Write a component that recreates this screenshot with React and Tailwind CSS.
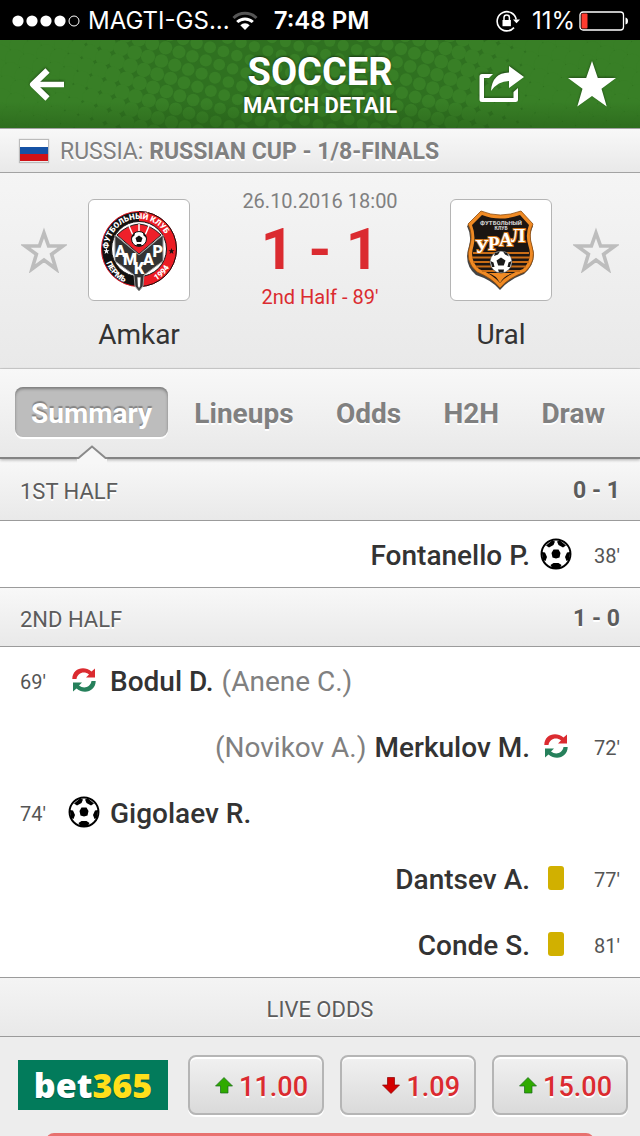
import { useState } from 'react';

const tabs = ['Summary', 'Lineups', 'Odds', 'H2H', 'Draw'];

const firstHalf = [
    { id: 1, side: 'away', type: 'goal', player: 'Fontanello P.', minute: "38'" },
];

const secondHalf = [
    { id: 2, side: 'home', type: 'sub', player: 'Bodul D.', out: '(Anene C.)', minute: "69'" },
    { id: 3, side: 'away', type: 'sub', player: 'Merkulov M.', out: '(Novikov A.)', minute: "72'" },
    { id: 4, side: 'home', type: 'goal', player: 'Gigolaev R.', minute: "74'" },
    { id: 5, side: 'away', type: 'yellow', player: 'Dantsev A.', minute: "77'" },
    { id: 6, side: 'away', type: 'yellow', player: 'Conde S.', minute: "81'" },
];

const odds = [
    { id: 'home', value: '11.00', up: true },
    { id: 'draw', value: '1.09', up: false },
    { id: 'away', value: '15.00', up: true },
];

// Halftone dots on a tilted square grid, growing towards both sides
const dots = [];
for (let i = -30; i < 50; i++) {
    for (let j = -30; j < 30; j++) {
        const x = 179 + i * 13.4 - j * 4.2;
        const y = 12 + i * 4.2 + j * 13.2;
        if (x > -12 && x < 652 && y > -12 && y < 100) {
            const d = x - 300;
            dots.push({ x, y, r: Math.min(9.6, 5.5 + 0.00007 * d * d) });
        }
    }
}

function StatusBar() {
    return (
        <div className="flex h-10 shrink-0 items-center justify-between bg-black px-3 pt-[2px] font-[Inter,sans-serif] text-2xl text-white">
            <div className="flex items-center">
                <svg width="68" height="12" viewBox="0 0 68 12" className="mr-2">
                    {[6, 20, 34, 48].map((x) => (
                        <circle key={x} cx={x} cy="6" r="5.6" fill="#fff" />
                    ))}
                    <circle cx="62" cy="6" r="5" fill="none" stroke="#fff" />
                </svg>
                <span>MAGTI-GS...</span>
                <svg width="26" height="20" viewBox="0 0 26 20" className="ml-[2px]" fill="none" strokeWidth="3">
                    <path d="M1.5 7 A16.5 16.5 0 0 1 24.5 7" stroke="#555" />
                    <path d="M5.2 11 A11.3 11.3 0 0 1 20.8 11" stroke="#fff" />
                    <path d="M13 19 L8.3 14.2 A6.8 6.8 0 0 1 17.7 14.2 Z" fill="#fff" stroke="none" />
                </svg>
                <span className="ml-4 font-semibold">7:48 PM</span>
            </div>
            <div className="flex items-center">
                <svg width="24" height="22" viewBox="0 0 24 22" className="mr-3" fill="none" stroke="#fff">
                    <path d="M18 17.6 A9.6 9.6 0 1 1 20.2 9.5" strokeWidth="1.6" />
                    <path d="M17 9.5 H24 L20.5 13.2 Z" fill="#fff" stroke="none" />
                    <rect x="6.5" y="10" width="8.4" height="6.2" fill="#fff" stroke="none" />
                    <path d="M8 10 V7.6 A2.7 2.7 0 0 1 13.4 7.6 V10" strokeWidth="1.5" />
                </svg>
                <span>11%</span>
                <svg width="49" height="20" viewBox="0 0 49 20" className="ml-1">
                    <rect x="1" y="1" width="43.5" height="18" rx="3" fill="none" stroke="#fff" strokeWidth="1.3" />
                    <rect x="2.5" y="2.5" width="6" height="15" rx="1" fill="#ff3b2f" />
                    <path d="M46.5 6.5 Q49 7 49 10 T46.5 13.5 Z" fill="#fff" />
                </svg>
            </div>
        </div>
    );
}

function Header() {
    return (
        <header className="relative flex h-[88px] shrink-0 items-center justify-between bg-[#2f7120] px-7 text-white">
            <svg className="absolute inset-0 h-full w-full" viewBox="0 0 640 88" preserveAspectRatio="xMidYMid slice">
                <defs>
                    <linearGradient id="headerShade" x1="0" y1="0" x2="0" y2="1">
                        <stop offset="0.7" stopColor="#1c4c10" stopOpacity="0" />
                        <stop offset="1" stopColor="#1c4c10" stopOpacity="0.35" />
                    </linearGradient>
                </defs>
                {dots.map((dot) => (
                    <circle key={`${dot.x}-${dot.y}`} cx={dot.x} cy={dot.y} r={dot.r} fill="#387f26" />
                ))}
                <rect width="640" height="88" fill="url(#headerShade)" />
            </svg>
            <div className="relative flex flex-1">
                <button type="button" aria-label="Back">
                    <svg width="37" height="34" viewBox="0 0 37 34" fill="none" stroke="#fff" strokeWidth="6" className="drop-shadow-[0_-1px_1px_rgba(0,0,0,0.4)]">
                        <path d="M19.5 3.5 L5 17.5 L19.5 31.5" strokeLinejoin="round" />
                        <path d="M4 17.5 H36" strokeWidth="5.5" />
                    </svg>
                </button>
            </div>
            <div className="relative flex flex-col items-center pt-2 font-bold [text-shadow:0_-1px_2px_rgba(0,0,0,0.5)]">
                <h1 className="text-[38px] leading-9">SOCCER</h1>
                <h2 className="text-[22px] leading-8">MATCH DETAIL</h2>
            </div>
            <div className="relative flex flex-1 items-center justify-end gap-11">
                <button type="button" aria-label="Share">
                    <svg width="48" height="40" viewBox="0 0 48 40" className="drop-shadow-[0_-1px_1px_rgba(0,0,0,0.4)]">
                        <path d="M17 10 H6 Q3.500 10 3.500 12.500 V35.500 Q3.500 38 6 38 H39.500 Q42 38 42 35.500 V24 L37.500 28 V34 H8 V14 H13 Z" fill="#fff" />
                        <path d="M15 27 Q16 9 33 8.500 V2 L48 13 L33 24 V17 Q22 17 15 27 Z" fill="#fff" />
                    </svg>
                </button>
                <button type="button" aria-label="Favourite" className="-mr-1">
                    <svg width="48" height="46" viewBox="0 0 48 46" className="drop-shadow-[0_-1px_1px_rgba(0,0,0,0.4)]">
                        <path d="M24 0 L29.800 17 H48 L33.500 27.800 L38.700 45.500 L24 35 L9.300 45.500 L14.500 27.800 L0 17 H18.200 Z" fill="#fff" />
                    </svg>
                </button>
            </div>
        </header>
    );
}

function StarOutline({ label }) {
    return (
        <button type="button" aria-label={label} className="flex h-[102px] items-center">
            <svg width="46" height="46" viewBox="0 0 46 46" fill="none" stroke="#bdbdbd" strokeWidth="3.600">
                <path d="M23 6 L27.600 19 H42 L30.600 27.300 L35 42 L23 33 L11 42 L15.400 27.300 L4 19 H18.400 Z" />
            </svg>
        </button>
    );
}

function Team({ name, children }) {
    return (
        <div className="flex w-[102px] flex-col items-center">
            <div className="flex h-[102px] w-full items-center justify-center rounded-md border border-[#b5b5b5] bg-white">
                {children}
            </div>
            <span className="mt-4 text-[28px] leading-9 text-[#333]">{name}</span>
        </div>
    );
}

function AmkarCrest() {
    return (
        <svg width="80" height="84" viewBox="0 0 80 84" fontFamily="Roboto, sans-serif" fontWeight="900">
            <defs>
                <path id="amkarTop" d="M10 47 A30.500 30.500 0 1 1 70 47" />
                <path id="amkarLeft" d="M5 47 A35.500 35.500 0 0 0 34 77" />
                <path id="amkarRight" d="M46 76.500 A35.500 35.500 0 0 0 74.500 48" />
            </defs>
            <circle cx="40" cy="41" r="37.500" fill="#111" stroke="#e1131b" strokeWidth="1" />
            <path d="M40 3.500 A37.500 37.500 0 0 1 40 78.500 Z" fill="#ec1c24" />
            <path d="M40 3.500 A37.500 37.500 0 0 1 40 78.500" fill="none" stroke="#111" />
            <circle cx="40" cy="41" r="27.500" fill="#fff" stroke="#111" />
            <path d="M16 27 L40 47 L64 27 L64 53 L45 67 L44 78 L40 83 L36 78 L35 67 L16 53 Z" fill="#333" stroke="#999" />
            <path d="M18 27 Q28 17 40 16 Q52 17 62 27 L40 46 Z" fill="#ee202a" stroke="#222" />
            <path d="M30 18 L36 32 M40 16 V30 M50 18 L44 32" stroke="#fff" strokeWidth="1.5" />
            <circle cx="40" cy="31" r="7.500" fill="#fff" stroke="#111" />
            <path d="M40 27.500 L43.500 30 L42.200 34 H37.800 L36.500 30 Z M34 26 L36 24.500 L35.500 27.500 L32.500 30 Z M46 26 L44 24.500 L44.500 27.500 L47.500 30 Z M37 38 L38 36 H42 L43 38 Z" fill="#111" />
            <text x="16 24 35 44 53.500" y="49 57 66 57 49" fontSize="16" fill="#fff">АМКАР</text>
            <path d="M38 69 H42 L41.500 78 L40 81 L38.500 78 Z" fill="#fff" stroke="#333" strokeWidth="0.7" />
            <text fontSize="8" fill="#fff">
                <textPath href="#amkarTop" startOffset="6">ФУТБОЛЬНЫЙ КЛУБ</textPath>
            </text>
            <text fontSize="8" fill="#fff">
                <textPath href="#amkarLeft" startOffset="8">ПЕРМЬ</textPath>
            </text>
            <text fontSize="8" fill="#fff">
                <textPath href="#amkarRight" startOffset="12">1994</textPath>
            </text>
            <path d="M7.500 40 L8.300 42.300 H10.500 L8.700 43.600 L9.400 46 L7.500 44.600 L5.600 46 L6.300 43.600 L4.500 42.300 H6.700 Z" fill="#fff" />
            <path d="M72.500 40 L73.300 42.300 H75.500 L73.700 43.600 L74.400 46 L72.500 44.600 L70.600 46 L71.300 43.600 L69.500 42.300 H71.700 Z" fill="#111" />
        </svg>
    );
}

function UralCrest() {
    return (
        <svg width="74" height="84" viewBox="0 0 74 84" fontFamily="Roboto, sans-serif" fontWeight="900">
            <path d="M16 5 Q36 12 58 5 L69 18 Q64 28 68 38 Q74 54 60 66 Q44 72 36 82 Q28 72 12 67 Q-1 56 5 38 Q8 28 3 18 Z" fill="#444" />
            <path d="M17 3 Q36 11 57 3 L69 16 Q64 26 68 38 Q73 53 61 64 Q44 70 36 80 Q28 70 13 64 Q0 53 6 37 Q9 26 4 16 Z" fill="#f08a24" stroke="#8d4a0b" strokeWidth="0.8" />
            <path d="M18 7 Q36 14 56 7 L65 17 Q61 27 64.500 38 Q69 51 59 61 Q44 66 36 75 Q28 66 15 61 Q5 52 9.500 38 Q12 27 8 17 Z" fill="#1c1512" />
            <path d="M9 45 H65 M8 49.500 H66 M9 54 H65 M12 58.500 H62 M18 63 H56" stroke="#c96d17" strokeWidth="2" />
            <path d="M24 65 Q32 67 36 75 Q40 67 50 65 Z" fill="#f08a24" />
            <text x="37" y="17" fontSize="6" textAnchor="middle" fill="#c9c9c9">ФУТБОЛЬНЫЙ</text>
            <text x="37" y="22" fontSize="5" textAnchor="middle" fill="#c9c9c9">КЛУБ</text>
            <text x="11 24 35 47" y="45 42 38 34" fontSize="19" fontFamily="Liberation Serif, serif" fontWeight="700" fill="#fff" stroke="#d0761b" strokeWidth="2" paintOrder="stroke">УРАЛ</text>
            <circle cx="37" cy="54" r="11" fill="#fff" stroke="#333" strokeWidth="0.6" />
            <path d="M37 49.500 L41.500 52.500 L39.800 57.500 H34.200 L32.500 52.500 Z M31 45 L36 43.500 L34 46.500 L30 48 Z M43 45 L39 43.500 L41 46.500 L45 48.500 Z M26.500 53 L29.500 54.500 L30.500 59 L28 59 Z M47.500 53 L44.500 54.500 L43.500 59 L46 59 Z M34 61.500 L40 61.500 L39.500 64.500 L35 64.500 Z" fill="#1b1b1b" />
        </svg>
    );
}

function BallIcon() {
    return (
        <svg width="32" height="32" viewBox="0 0 32 32">
            <circle cx="16" cy="16" r="14.500" fill="#fff" stroke="#000" strokeWidth="1.900" />
            <path d="M13.500 11.500 H18.500 L20.500 15 L19.500 19.500 L16 20.500 L12.500 19.500 L11.500 15 Z M6 7.500 L12 2.500 L15 3.500 L13.500 7 L9 9.500 Z M26 7.500 L20 2.500 L17 3.500 L18.500 7 L23 9.500 Z M1.800 14 L5 14.500 L7 19 L5.500 23 L3 22 Z M30.200 14 L27 14.500 L25 19 L26.500 23 L29 22 Z M10.500 27 L13.500 25 H18.500 L21.500 27 L19.500 30.500 H12.500 Z" fill="#000" />
        </svg>
    );
}

function SubIcon() {
    return (
        <svg width="24" height="24" viewBox="0 0 24 24">
            <path d="M0.300 11 C0.300 1 11.500 -3 19.500 3.500 L23 0.500 V9.500 H14 L17 6.500 C12 2.500 5.500 5 4.500 11 Z" fill="#db2b30" />
            <path d="M23.700 13 C23.700 23 12.500 27 4.500 20.500 L1 23.500 V14.500 H10 L7 17.500 C12 21.500 18.500 19 19.500 13 Z" fill="#26805b" />
        </svg>
    );
}

function EventIcon({ type }) {
    return (
        <span className="flex w-8 justify-center">
            {type === 'goal' && <BallIcon />}
            {type === 'sub' && <SubIcon />}
            {type === 'yellow' && <span className="h-6 w-4 rounded-[3px] bg-[#d1b000]"></span>}
        </span>
    );
}

function EventRow({ event }) {
    const away = event.side === 'away';
    return (
        <li className={`flex h-[66px] items-center px-5 ${away ? 'flex-row-reverse' : ''}`}>
            <span className={`w-7 pt-1 text-xl text-[#555] ${away ? 'text-right' : ''}`}>{event.minute}</span>
            <span className={away ? 'mr-5' : 'ml-5'}>
                <EventIcon type={event.type} />
            </span>
            <p className={`flex gap-2 pt-1 text-[28px] font-medium text-[#333] ${away ? 'mr-[10px] flex-row-reverse' : 'ml-[10px]'}`}>
                <span>{event.player}</span>
                {event.out && <span className="font-normal text-[#808080]">{event.out}</span>}
            </p>
        </li>
    );
}

function SectionBar({ title, score, first }) {
    return (
        <div
            className={`flex items-center justify-between border-b border-[#9b9b9b] bg-linear-to-b from-[#f8f8f8] to-[#e9e9e9] px-5 pt-1 text-[22px] text-[#5c5c5c] [text-shadow:0_2px_0_#fff] ${
                first ? 'h-[62px]' : 'h-[60px] border-t'
            }`}
        >
            <h3>{title}</h3>
            <span className="text-[23px] font-bold">{score}</span>
        </div>
    );
}

function OddsArrow({ up }) {
    return (
        <svg width="18" height="17" viewBox="0 0 18 17">
            {up ? (
                <path d="M9 0.500 L17.500 9 H13 V16 H5.500 V9 H0.500 Z" fill="#2faa00" stroke="#17671a" strokeWidth="0.700" />
            ) : (
                <path d="M5.500 0.500 H12.500 V8 H17.500 L9 16.500 L0.500 8 H5.500 Z" fill="#d40000" stroke="#8b0000" strokeWidth="0.700" />
            )}
        </svg>
    );
}

export default function App() {
    const [activeTab, setActiveTab] = useState('Summary');

    return (
        <div className="flex h-screen w-full flex-col overflow-hidden bg-white font-[Roboto,sans-serif]">
            <StatusBar />
            <Header />

            {/* League */}
            <div className="flex h-[45px] shrink-0 items-center border-y border-[#a3a3a3] bg-linear-to-b from-[#f8f8f8] to-[#e9e9e9] px-5 text-[23px] text-[#808080] [text-shadow:0_2px_0_#fff]">
                <span className="mr-3 flex h-[22px] w-7 flex-col shadow-[0_0_1px_1px_#bbb]">
                    <span className="flex-1 bg-white"></span>
                    <span className="flex-1 bg-[#1552a5]"></span>
                    <span className="flex-1 bg-[#d01217]"></span>
                </span>
                <p className="pt-1">
                    RUSSIA: <b>RUSSIAN CUP - 1/8-FINALS</b>
                </p>
            </div>

            {/* Match */}
            <section className="flex h-[196px] shrink-0 items-start justify-between border-b border-[#cfcfcf] bg-linear-to-b from-[#f5f5f5] to-[#e9e9e9] px-[21px] pt-[26px]">
                <div className="flex gap-[21px]">
                    <StarOutline label="Follow Amkar" />
                    <Team name="Amkar">
                        <AmkarCrest />
                    </Team>
                </div>
                <div className="-mt-3 flex flex-col items-center text-xl text-[#db2b30]">
                    <span className="leading-7 text-[#808080]">26.10.2016 18:00</span>
                    <span className="py-1 text-[58px] leading-[60px] font-bold">1 - 1</span>
                    <span className="leading-7">2nd Half - 89'</span>
                </div>
                <div className="flex flex-row-reverse gap-[21px]">
                    <StarOutline label="Follow Ural" />
                    <Team name="Ural">
                        <UralCrest />
                    </Team>
                </div>
            </section>

            {/* Tabs */}
            <nav className="relative z-10 flex h-[90px] shrink-0 items-center justify-between border-b-2 border-[#848484] bg-linear-to-b from-[#f8f8f8] to-[#e9e9e9] pr-[19px] pb-[2px] pl-[15px] shadow-[0_1px_3px_rgba(0,0,0,0.3)]">
                {tabs.map((tab) => (
                    <button
                        key={tab}
                        type="button"
                        onClick={() => setActiveTab(tab)}
                        className={`relative h-[50px] rounded-lg px-4 pt-[3px] text-[28px] font-bold ${
                            activeTab === tab
                                ? 'bg-[#bdbdbd] text-white shadow-[inset_0_2px_3px_rgba(0,0,0,0.35),0_2px_0_#fff] [text-shadow:0_-2px_1px_#858585]'
                                : 'text-[#808080] [text-shadow:0_2px_0_#fff]'
                        }`}
                    >
                        {tab}
                        {activeTab === tab && (
                            <svg width="32" height="18" viewBox="0 0 32 18" className="absolute top-full left-1/2 mt-2 -translate-x-1/2">
                                <path d="M1 13 L16 1.500 L31 13 V18 H1 Z" fill="#f7f7f7" />
                                <path d="M0 13 H2.500 L16 1.500 L29.500 13 H32" fill="none" stroke="#8a8a8a" strokeWidth="2" />
                            </svg>
                        )}
                    </button>
                ))}
            </nav>

            {/* Events */}
            <main className="shrink-0">
                <SectionBar title="1ST HALF" score="0 - 1" first />
                <ul>
                    {firstHalf.map((event) => (
                        <EventRow key={event.id} event={event} />
                    ))}
                </ul>
                <SectionBar title="2ND HALF" score="1 - 0" />
                <ul>
                    {secondHalf.map((event) => (
                        <EventRow key={event.id} event={event} />
                    ))}
                </ul>
            </main>

            {/* Live odds */}
            <h3 className="flex h-[60px] shrink-0 items-center justify-center border-y border-[#9b9b9b] bg-linear-to-b from-[#f4f4f4] to-[#e9e9e9] pt-1 text-[22px] text-[#5c5c5c] [text-shadow:0_2px_0_#fff]">
                LIVE ODDS
            </h3>
            <section className="shrink-0 bg-[#ededed] pt-[18px]">
                <div className="flex items-center pr-3 pl-[18px]">
                    <a href="#bet365" className="mr-5 flex h-[50px] w-[150px] items-center justify-center bg-[#027b5b] font-['Open_Sans',sans-serif] text-[34px] font-extrabold text-white [text-shadow:0_1px_1px_rgba(0,0,0,0.3)]">
                        bet<span className="text-[#ffdf1b]">365</span>
                    </a>
                    <div className="flex flex-1 gap-4">
                        {odds.map((odd) => (
                            <button
                                key={odd.id}
                                type="button"
                                className="flex h-[60px] flex-1 items-center justify-end gap-[6px] rounded-lg border-2 border-[#b5b5b5] bg-linear-to-b from-[#f1f1f1] to-[#dadada] pr-[14px] text-[27px] font-medium text-[#db2b30] shadow-[0_2px_0_#fff,inset_0_2px_0_#fff] [text-shadow:0_2px_0_#fff]"
                            >
                                <OddsArrow up={odd.up} />
                                <span className="pt-1">{odd.value}</span>
                            </button>
                        ))}
                    </div>
                </div>
                <div className="mx-[46px] mt-[18px] h-16 rounded-lg bg-[#e8716f]"></div>
            </section>
        </div>
    );
}
